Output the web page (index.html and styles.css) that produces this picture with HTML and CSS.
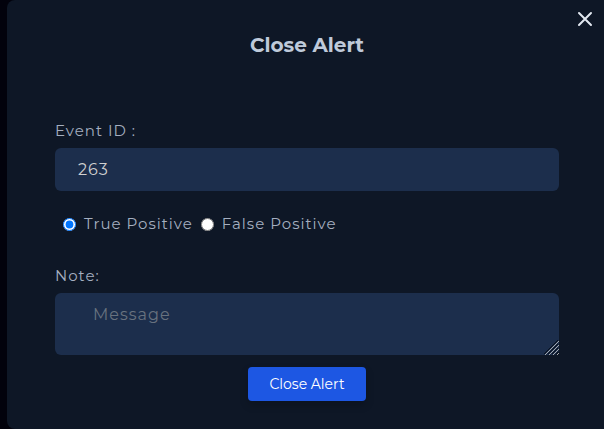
FILE: index.html
```html
<!DOCTYPE html>
<html lang="en">
<head>
<meta charset="utf-8">
<meta name="viewport" content="width=device-width, initial-scale=1">
<title>Close Alert</title>
<link rel="stylesheet" href="styles.css">
</head>
<body>
<main class="modal">
  <button class="dismiss" type="button" aria-label="Close">
    <svg width="16" height="16" viewBox="0 0 16 16" fill="none" stroke="currentColor" stroke-width="2" stroke-linecap="round" aria-hidden="true"><path d="M2 2l12 12M14 2L2 14"/></svg>
  </button>
  <h1 class="title">Close Alert</h1>
  <form class="form">
    <label class="label" for="event-id">Event ID :</label>
    <input class="field" id="event-id" type="text" value="263">
    <div class="choices">
      <input class="radio" type="radio" name="verdict" id="true-positive" checked>
      <label class="label" for="true-positive">True Positive</label>
      <input class="radio" type="radio" name="verdict" id="false-positive">
      <label class="label" for="false-positive">False Positive</label>
    </div>
    <label class="label" for="note">Note:</label>
    <div class="note">
      <textarea class="field message" id="note" placeholder="Message"></textarea>
      <svg class="grip" width="15" height="15" viewBox="0 0 15 15" fill="none" aria-hidden="true"><path stroke="#08101e" d="M0 14L14 0M4 14L14 4M8 14L14 8M12 14L14 12"/><path stroke="#a5a9ac" d="M1 15L15 1M5 15L15 5M9 15L15 9M13 15L15 13"/></svg>
    </div>
    <button class="submit" type="submit">Close Alert</button>
  </form>
</main>
</body>
</html>
```

FILE: styles.css
```css
* {
  box-sizing: border-box;
}

body {
  margin: 0;
  min-height: 100vh;
  padding-left: 7px;
  display: flex;
  background: #02020c;
  font-family: Montserrat, Inter, "Liberation Sans", sans-serif;
  color: #a5afc0;
}

.modal {
  position: relative;
  flex: 1;
  padding: 32px 45px 28px 48px;
  border-radius: 8px 0 0 8px;
  background: #0e1726;
}

.dismiss {
  position: absolute;
  top: 11px;
  right: 11px;
  display: flex;
  padding: 0;
  border: 0;
  background: none;
  color: #e2e8f0;
  cursor: pointer;
}

.title {
  margin: 0 0 61px;
  font-size: 20px;
  line-height: 26px;
  font-weight: 700;
  text-align: center;
  color: #bfcada;
}

.form {
  display: flex;
  flex-direction: column;
}

.label {
  font-size: 15px;
  line-height: 24px;
  letter-spacing: 1px;
}

.field {
  width: 100%;
  height: 43px;
  margin: 5px 0 0;
  padding: 8px 23px;
  border: 0;
  border-radius: 6px;
  background: #1c2e4c;
  color: #d0d0d0;
  font-family: inherit;
  font-size: 16px;
  line-height: 24px;
  letter-spacing: 1px;
}

.choices {
  display: flex;
  align-items: center;
  gap: 8px;
  margin: 21px 0 28px;
  padding-left: 8px;
}

.radio {
  width: 13px;
  height: 13px;
  margin: 0;
}

.note {
  position: relative;
}

.message {
  display: block;
  height: 62px;
  padding: 10px 38px;
  resize: vertical;
}

.message::placeholder {
  color: #68727f;
}

.message::-webkit-resizer {
  background: transparent;
}

.grip {
  position: absolute;
  right: 0;
  bottom: 0;
  pointer-events: none;
}

.submit {
  align-self: center;
  margin-top: 12px;
  padding: 7px 21px;
  border: 0;
  border-radius: 4px;
  background: #1d57e3;
  box-shadow: 0 4px 8px rgb(0 0 0 / 20%);
  color: #fff;
  font-family: inherit;
  font-size: 14px;
  line-height: 20px;
  cursor: pointer;
}
```
